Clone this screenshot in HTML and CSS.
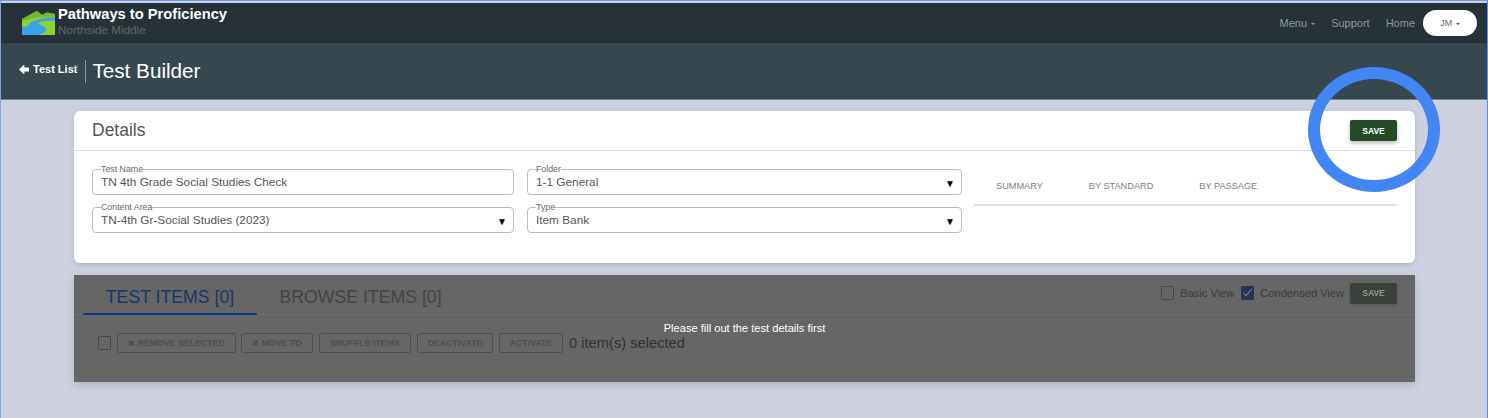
FILE: index.html
```html
<!DOCTYPE html>
<html lang="en">
<head>
<meta charset="utf-8">
<title>Test Builder</title>
<link rel="stylesheet" href="styles.css">
</head>
<body>
<div class="frame">
  <header class="navbar">
    <div class="brand">
      <svg class="logo" width="33" height="24" viewBox="0 0 33 24" aria-hidden="true">
        <path d="M0 8 L15 0 L20 4 L25 1.5 L33 3 V24 H0 Z" fill="#8cd32f"/>
        <path d="M0 8 L15 0 L20 4 L25 1.5 L33 3 V6 Q24 5 18 6 L0 10 Z" fill="#76b82a"/>
        <path d="M33 7 C24 6.5 12 8 11 11 C10 13 18 14 18.5 16.5 C19 19.5 16 22 14 24 H0 V15 C3 14 6 15 6.5 13 C7 9.5 18 5 33 5.5 Z" fill="#38a3ec" transform="translate(0 1)"/>
        <path d="M33 9 C26 8.5 17 9.5 16.5 11 C16 13 24.5 14 24.5 17 C24.5 20 19 22 16 24 H13 C16 21 19 19 18.5 16.5 C18 14 10 13 11 11 C12 8 24 6.5 33 7 Z" fill="#38a3ec" transform="translate(0 1)"/>
      </svg>
      <div class="brand-text">
        <div class="brand-name">Pathways to Proficiency</div>
        <div class="brand-school">Northside Middle</div>
      </div>
    </div>
    <nav class="nav">
      <a class="nav-link">Menu <span class="caret"></span></a>
      <a class="nav-link">Support</a>
      <a class="nav-link">Home</a>
      <button class="user-btn">JM <span class="caret caret-dark"></span></button>
    </nav>
  </header>

  <div class="subheader">
    <a class="back"><svg class="back-arrow" width="10" height="9" viewBox="0 0 10 9" aria-hidden="true"><path d="M0 4.5 L4.6 0 L5.4 0 V2.6 H10 V6.4 H5.4 V9 H4.6 Z" fill="#fff"/></svg>Test List</a>
    <h1 class="page-title">Test Builder</h1>
  </div>

  <main class="content">
    <section class="card details">
      <div class="details-head">
        <h2 class="details-title">Details</h2>
        <button class="save">SAVE</button>
      </div>
      <div class="details-body">
        <div class="fields">
          <fieldset class="field"><legend>Test Name</legend><span class="value">TN 4th Grade Social Studies Check</span></fieldset>
          <fieldset class="field"><legend>Folder</legend><span class="value">1-1 General</span><span class="arrow">▼</span></fieldset>
          <fieldset class="field"><legend>Content Area</legend><span class="value">TN-4th Gr-Social Studies (2023)</span><span class="arrow">▼</span></fieldset>
          <fieldset class="field"><legend>Type</legend><span class="value">Item Bank</span><span class="arrow">▼</span></fieldset>
        </div>
        <div class="summary-tabs">
          <a class="summary-tab tab-summary">SUMMARY</a>
          <a class="summary-tab tab-standard">BY STANDARD</a>
          <a class="summary-tab">BY PASSAGE</a>
        </div>
      </div>
    </section>

    <section class="card items">
      <div class="items-head">
        <div class="item-tabs">
          <a class="item-tab active">TEST ITEMS [0]</a>
          <a class="item-tab">BROWSE ITEMS [0]</a>
        </div>
        <div class="view-opts">
          <span class="check"></span><span class="view-label">Basic View</span>
          <span class="check checked"><svg width="13" height="13" viewBox="0 0 13 13" aria-hidden="true"><path d="M2.5 7 L5.2 9.6 L10.5 3.2" fill="none" stroke="#8fa3c0" stroke-width="1"/></svg></span><span class="view-label">Condensed View</span>
          <button class="save save-dim">SAVE</button>
        </div>
      </div>
      <div class="toolbar">
        <span class="check"></span>
        <button class="outline w-remove"><span class="glyph">✖</span> REMOVE SELECTED</button>
        <button class="outline w-move"><span class="glyph">⇵</span> MOVE TO</button>
        <button class="outline w-shuffle">SHUFFLE ITEMS</button>
        <button class="outline w-deact">DEACTIVATE</button>
        <button class="outline w-act">ACTIVATE</button>
        <span class="selected">0 item(s) selected</span>
      </div>
      <div class="overlay"><span class="overlay-text">Please fill out the test details first</span></div>
    </section>
  </main>
  <div class="ring"></div>
</div>
</body>
</html>
```
FILE: styles.css
```css
* { box-sizing: border-box; }
html, body { margin: 0; height: 100%; }
body { font-family: "Liberation Sans", Arial, sans-serif; background: #cdd1df; overflow: hidden; }
.frame { position: relative; height: 418px; padding-top: 2px; background: #cdd1df; border-top: 1px solid #6d9ae6; border-left: 1px solid #7fa4e6; border-right: 1px solid #5a90ea; }

.navbar { height: 40px; background: #263238; display: flex; align-items: center; justify-content: space-between; padding: 0 10px 0 21px; }
.brand { display: flex; align-items: center; }
.logo { margin-top: 0; }
.brand-text { margin-left: 3px; margin-top: -2px; }
.brand-name { color: #fff; font-weight: 700; font-size: 14.7px; line-height: 15px; }
.brand-school { color: #5f6669; font-size: 11.7px; line-height: 15px; }
.nav { display: flex; align-items: center; }
.nav-link { color: #8f989c; font-size: 11px; margin-right: 16px; }
.caret { display: inline-block; width: 0; height: 0; border: 2.5px solid transparent; border-top-color: #8f989c; border-bottom: 0; vertical-align: middle; margin-left: 1px; }
.caret-dark { border-top-color: #555; }
.user-btn { width: 54px; height: 26px; border: 0; border-radius: 13px; background: #fff; color: #666; font: 9px "Liberation Sans", Arial, sans-serif; padding: 0; margin-left: -8px; }

.subheader { height: 57px; background: #37474f; border-bottom: 1px solid #78828a; display: flex; align-items: center; padding-left: 18px; }
.back { color: #fff; font-weight: 700; font-size: 11px; display: flex; align-items: center; padding: 0 8px 4px 0; height: 23px; border-right: 1px solid #8a979d; }
.back-arrow { margin-right: 4px; }
.page-title { margin: 0 0 0 6px; font-weight: 400; font-size: 20.7px; color: #fff; }

.content { padding: 11px 72px 0 73px; display: flex; flex-direction: column; gap: 12px; }
.card { background: #fff; border-radius: 6px; box-shadow: 0 2px 5px rgba(60,65,90,.18); position: relative; }
.details { height: 152px; }
.details-head { height: 40px; border-bottom: 1px solid #e0e0e0; display: flex; align-items: center; justify-content: space-between; padding: 0 18px; }
.details-title { margin: 0; font-weight: 400; font-size: 17.5px; color: #555; }
.save { width: 47px; height: 21px; background: #254a28; color: #fff; border: 0; border-radius: 2px; font: 700 8.5px "Liberation Sans", Arial, sans-serif; box-shadow: 0 2px 4px rgba(0,0,0,.3); padding: 0; }
.save-dim { background: #3a403a; color: #8f958f; box-shadow: 0 1px 3px rgba(0,0,0,.15); }
.details-body { display: flex; padding: 14px 18px 0; }
.fields { display: grid; grid-template-columns: 422px 435px; column-gap: 13px; row-gap: 8px; align-self: start; }
.field { position: relative; margin: 0; height: 30px; padding: 0 8px; border: 1px solid #bdbdbd; border-radius: 4px; min-width: 0; display: block; }
.field legend { font-size: 8.8px; line-height: 8px; color: #666; padding: 0; }
.value { display: block; font-size: 11.8px; line-height: 20px; color: #555; margin-top: -1px; }
.arrow { position: absolute; right: 6px; top: 1px; font-size: 10px; color: #000; line-height: 20px; }
.summary-tabs { margin-left: 12px; width: 423px; height: 41px; border-bottom: 2px solid #e0e0e0; display: flex; padding: 14px 0 0 22px; }
.summary-tab { font-size: 9.2px; line-height: 14px; color: #808080; }
.tab-summary { margin-right: 46px; }
.tab-standard { margin-right: 46px; }

.items { height: 107px; border-radius: 0; background: #666; box-shadow: 0 3px 8px rgba(60,65,90,.2); overflow: hidden; }
.items-head { height: 40px; border-bottom: 1px solid #6e6e6e; display: flex; justify-content: space-between; padding: 0 18px 0 9px; }
.item-tabs { display: flex; }
.item-tab { width: 174px; height: 40px; font-size: 17.7px; line-height: 44px; text-align: center; color: #444; white-space: nowrap; }
.item-tab + .item-tab { width: 207px; }
.item-tab.active { color: #1a3668; border-bottom: 2px solid #0f3a8c; }
.view-opts { display: flex; align-items: center; height: 40px; margin-top: -2px; }
.check { display: block; width: 13px; height: 14px; border: 1px solid #484848; border-radius: 1px; flex: none; }
.check.checked { background: #263650; border-color: #263650; margin-left: 7px; }
.check svg { display: block; margin: -1px; }
.view-label { font-size: 11.1px; color: #3c3c3c; margin-left: 6px; }
.view-opts .save { margin-left: 6px; }
.toolbar { display: flex; align-items: center; padding: 18px 0 0 24px; }
.outline { height: 20px; background: #666; border: 1px solid #4a524e; border-radius: 2px; color: #4a524e; font: 700 8.8px "Liberation Sans", Arial, sans-serif; padding: 0; margin-left: 6px; white-space: nowrap; }
.glyph { font-size: 8px; }
.w-remove { width: 119px; }
.w-move { width: 72px; margin-left: 5px; }
.w-shuffle { width: 92px; }
.w-deact { width: 76px; }
.w-act { width: 64px; }
.selected { font-size: 14.7px; color: #333; margin-left: 6px; }
.overlay { position: absolute; inset: 0; display: flex; align-items: center; justify-content: center; }
.overlay-text { color: #fff; font-size: 11.1px; position: relative; top: -1px; }

.ring { position: absolute; left: 1307px; top: 66px; width: 132px; height: 125px; border: 12px solid #4285f4; border-radius: 50%; }
```
